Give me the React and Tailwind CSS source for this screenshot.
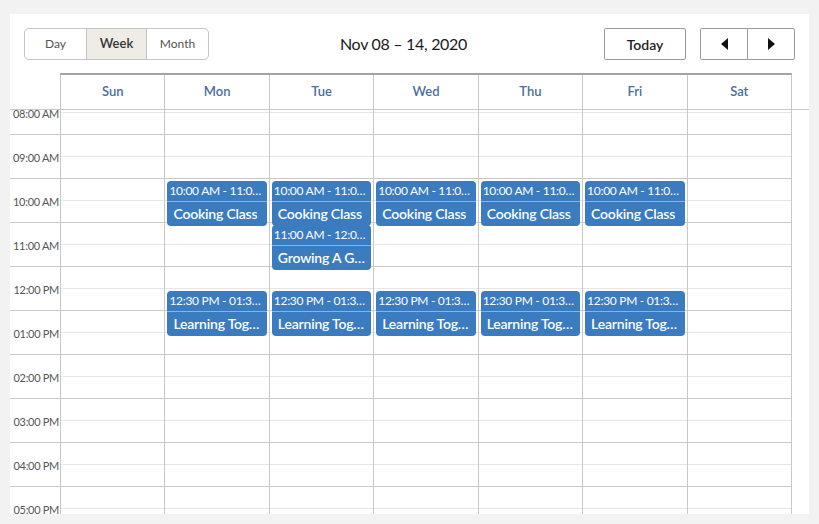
import React from 'react';

const days = ['Sun', 'Mon', 'Tue', 'Wed', 'Thu', 'Fri', 'Sat'];
const hours = ['08:00 AM', '09:00 AM', '10:00 AM', '11:00 AM', '12:00 PM', '01:00 PM', '02:00 PM', '03:00 PM', '04:00 PM', '05:00 PM', '06:00 PM'];

const SLOT = 44;

// start is hours from 08:00
const events = [
  ...[1, 2, 3, 4, 5].map((d) => ({ day: d, start: 2, time: '10:00 AM - 11:00 AM', title: 'Cooking Class' })),
  { day: 2, start: 3, time: '11:00 AM - 12:00 PM', title: 'Growing A Garden' },
  ...[1, 2, 3, 4, 5].map((d) => ({ day: d, start: 4.5, time: '12:30 PM - 01:30 PM', title: 'Learning Together' })),
];

const Triangle = ({ dir }) => (
  <svg width="9" height="12" viewBox="0 0 9 12">
    {dir === 'left' ? <polygon points="8,0 8,12 1,6" fill="#111" /> : <polygon points="1,0 1,12 8,6" fill="#111" />}
  </svg>
);

const Event = ({ ev }) => (
  <div
    className="absolute left-[2px] right-[2px] h-[45px] rounded-[4px] bg-[#3b7bc0] text-white overflow-hidden flex flex-col"
    style={{ top: ev.start * SLOT + 2 }}
  >
    <div className="h-[21px] px-[2px] flex items-center text-[12px] tracking-[-0.3px] leading-none border-b border-[#8db3dc] shrink-0 min-w-0">
      <span className="truncate">{ev.time}</span>
    </div>
    <div className="flex-1 px-[6px] flex items-center text-[14px] font-semibold tracking-[-0.2px] leading-none min-w-0">
      <span className="truncate">{ev.title}</span>
    </div>
  </div>
);

export default function App() {
  return (
    <div className="w-[819px] h-[524px] bg-[#f2f2f2] pt-[14px] px-[10px] pb-[10px] overflow-hidden font-['Lato',sans-serif]">
      <div className="bg-white h-full flex flex-col">
        {/* toolbar */}
        <div className="flex items-center px-[14px] pt-[14px] h-[46px]">
          <div className="flex h-[32px] border border-[#c4c4c4] rounded-[5px] overflow-hidden text-[12px] text-[#555]">
            <button className="w-[61px] flex items-center justify-center">Day</button>
            <button className="w-[61px] flex items-center justify-center bg-[#efece6] border-x border-[#c4c4c4] text-[13px] font-semibold text-[#333]">Week</button>
            <button className="w-[61px] flex items-center justify-center">Month</button>
          </div>
          <div className="flex-1 text-center text-[16px] text-[#1a1a1a] tracking-[-0.3px] -translate-x-[3px]">Nov 08 – 14, 2020</div>
          <button className="w-[82px] h-[32px] border border-[#9a9a9a] rounded-[2px] text-[14px] font-semibold text-[#222]">Today</button>
          <div className="ml-[14px] flex h-[32px] border border-[#9a9a9a] rounded-[2px]">
            <button className="w-[47px] flex items-center justify-center border-r border-[#9a9a9a]"><Triangle dir="left" /></button>
            <button className="w-[46px] flex items-center justify-center"><Triangle dir="right" /></button>
          </div>
        </div>

        {/* grid */}
        <div className="mt-[13px] flex-1 flex flex-col min-h-0">
          <div className="flex h-[37px] border-b border-[#c8c8c8]">
            <div className="w-[50px] shrink-0" />
            <div className="w-[732px] flex border-t-2 border-[#a3a3a3] border-r border-r-[#c8c8c8]">
              {days.map((d) => (
                <div key={d} className="flex-1 flex items-center justify-center border-l border-[#c8c8c8] text-[13px] font-semibold text-[#4a6f9c]">
                  {d}
                </div>
              ))}
            </div>
          </div>

          <div className="flex-1 overflow-hidden">
            <div className="flex -mt-[19px]">
              <div className="w-[50px] shrink-0">
                {hours.map((h) => (
                  <div key={h} className="h-[44px] pt-[3px] border-b border-[#c8c8c8] flex items-center justify-end pr-[1px] text-[11px] tracking-[-0.3px] text-[#555] whitespace-nowrap">
                    {h}
                  </div>
                ))}
              </div>
              <div className="w-[732px] flex border-r border-[#c8c8c8]">
                {days.map((d, di) => (
                  <div key={d} className="flex-1 relative border-l border-[#c8c8c8]">
                    {hours.map((h) => (
                      <div key={h}>
                        <div className="h-[22px] border-b border-[#e6e6e6]" />
                        <div className="h-[22px] border-b border-[#c8c8c8]" />
                      </div>
                    ))}
                    {events.filter((e) => e.day === di).map((ev, k) => (
                      <Event key={k} ev={ev} />
                    ))}
                  </div>
                ))}
              </div>
            </div>
          </div>
        </div>
      </div>
    </div>
  );
}
